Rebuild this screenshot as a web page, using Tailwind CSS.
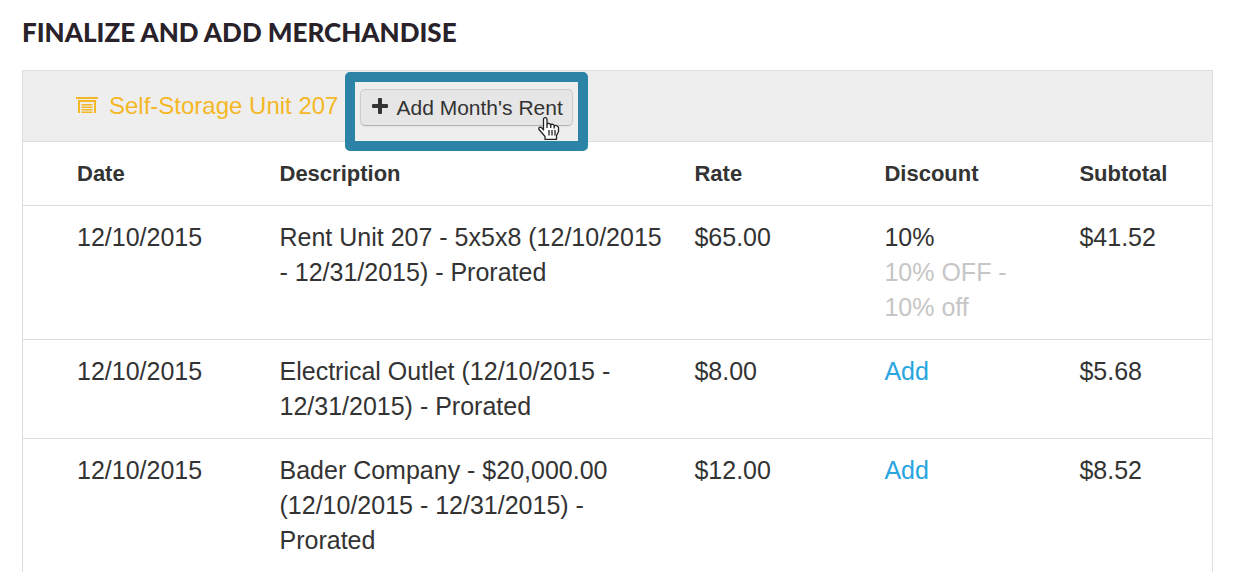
<!DOCTYPE html>
<html lang="en">
    <head>
        <meta charset="UTF-8" />
        <meta name="viewport" content="width=device-width, initial-scale=1.0" />
        <title>Finalize and Add Merchandise</title>
        <script src="https://cdn.jsdelivr.net/npm/@tailwindcss/browser@4"></script>
    </head>
    <body class="bg-white h-screen overflow-hidden font-['Liberation_Sans',Arial,sans-serif] text-[25px] leading-[35px] text-[#333]">
        <main class="pl-[22px] pr-[23px] pt-3">
            <h1 class="mb-[18px] font-['Lato',sans-serif] text-[26px] leading-[40px] font-black text-[#2a222b]">FINALIZE AND ADD MERCHANDISE</h1>

            <table class="w-full table-fixed border-collapse border border-[#ddd] text-left">
                <colgroup>
                    <col class="w-[257px]" />
                    <col />
                    <col class="w-[190px]" />
                    <col class="w-[195px]" />
                    <col class="w-[133px]" />
                </colgroup>
                <thead>
                    <!-- Unit title and rent button -->
                    <tr class="bg-[#eee] border-b border-[#ddd]">
                        <th colspan="5" class="h-[71px] pl-[53px] font-normal align-middle">
                            <div class="flex items-center">
                                <a href="#" class="flex items-center gap-[11px] mb-0.5 text-[24px] text-[#f4b826]">
                                    <svg class="w-[22px] h-[16px]" viewBox="0 0 22 16" fill="currentColor" aria-hidden="true">
                                        <path d="M0 0h22v2H0z" />
                                        <path d="M2 3h18v13h-2V5H4v11H2z" />
                                        <path d="M5.500 7h11v1.400h-11zM5.500 9.600h11v1.400h-11zM5.500 12.100h11v1.400h-11zM5.500 14.600h11V16h-11z" />
                                    </svg>
                                    Self-Storage Unit 207
                                </a>
                                <div class="relative mt-0.5 ml-[22px]">
                                    <button type="button" class="flex items-center gap-2 h-[37px] w-[213px] pl-[11px] whitespace-nowrap rounded-[5px] border border-[#ccc] border-b-[#b3b3b3] bg-[#e6e6e6] text-[21px] leading-[35px] shadow-xs">
                                        <svg class="w-4 h-4 mb-0.5 shrink-0" viewBox="0 0 16 16" fill="currentColor" aria-hidden="true">
                                            <path d="M7 0h2q1 0 1 1v5h5q1 0 1 1v2q0 1-1 1h-5v5q0 1-1 1H7q-1 0-1-1v-5H1q-1 0-1-1V7q0-1 1-1h5V1q0-1 1-1z" />
                                        </svg>
                                        Add Month's Rent
                                    </button>
                                    <!-- Highlight frame -->
                                    <div class="absolute -top-[17px] -bottom-[25px] -left-[15px] -right-[15px] border-10 border-[#2b84a5] rounded-[5px] pointer-events-none"></div>
                                    <!-- Hand pointer -->
                                    <svg class="absolute left-[178px] top-[28px] w-[22px] h-[23px] pointer-events-none" viewBox="0 0 22 23" aria-hidden="true">
                                        <path d="M5.500 13V2.500Q5.500.7 7.200.7T9 2.500V7.500Q9.500 6.300 11 6.500T12.700 8Q13.200 7 14.700 7.300T16.200 9Q17 8 18.300 8.500T20.500 10.500V14.500L18.500 18.500V22.300H7V19.500L4.500 16.500 1 12.500Q.3 10.500 2 10.200T5.500 13z" fill="#fff" stroke="#222" stroke-width="1.300" stroke-linejoin="round" />
                                        <path d="M9 7.500V11M12.700 8V11M16.200 9V11.500M11 13V18.500M14 13V18.500M17 13V18.500" fill="none" stroke="#222" stroke-width="1.300" />
                                    </svg>
                                </div>
                            </div>
                        </th>
                    </tr>
                    <tr class="border-b border-[#ddd] text-[22px]">
                        <th class="py-[14px] pl-[54px] font-bold">Date</th>
                        <th class="py-[14px] font-bold">Description</th>
                        <th class="py-[14px] font-bold">Rate</th>
                        <th class="py-[14px] font-bold">Discount</th>
                        <th class="py-[14px] font-bold">Subtotal</th>
                    </tr>
                </thead>
                <tbody class="align-top">
                    <tr class="border-b border-[#ddd]">
                        <td class="py-[14px] pl-[54px]">12/10/2015</td>
                        <td class="py-[14px] pr-7">Rent Unit 207 - 5x5x8 (12/10/2015 - 12/31/2015) - Prorated</td>
                        <td class="py-[14px]">$65.00</td>
                        <td class="py-[14px] pr-7">
                            10%
                            <div class="text-[#c6c6c6]">10% OFF - 10% off</div>
                        </td>
                        <td class="py-[14px]">$41.52</td>
                    </tr>
                    <tr class="border-b border-[#ddd]">
                        <td class="py-[14px] pl-[54px]">12/10/2015</td>
                        <td class="py-[14px] pr-7">Electrical Outlet (12/10/2015 - 12/31/2015) - Prorated</td>
                        <td class="py-[14px]">$8.00</td>
                        <td class="py-[14px] pr-7"><a href="#" class="text-[#29a5e0]">Add</a></td>
                        <td class="py-[14px]">$5.68</td>
                    </tr>
                    <tr class="border-b border-[#ddd]">
                        <td class="py-[14px] pl-[54px]">12/10/2015</td>
                        <td class="py-[14px] pr-7">Bader Company - $20,000.00 (12/10/2015 - 12/31/2015) - Prorated</td>
                        <td class="py-[14px]">$12.00</td>
                        <td class="py-[14px] pr-7"><a href="#" class="text-[#29a5e0]">Add</a></td>
                        <td class="py-[14px]">$8.52</td>
                    </tr>
                </tbody>
            </table>
        </main>
    </body>
</html>
